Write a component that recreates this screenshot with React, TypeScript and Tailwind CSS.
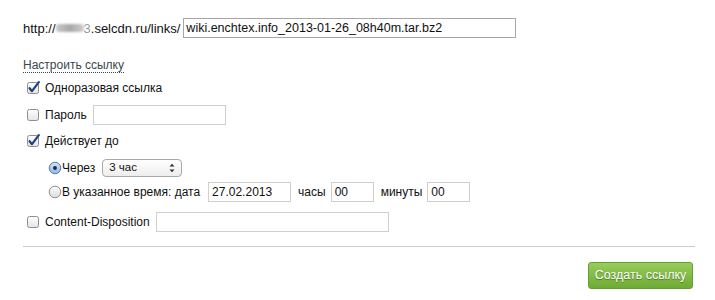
import React from "react";

function CheckBox({ checked }: { checked?: boolean }) {
  return (
    <svg width="14" height="14" viewBox="0 0 14 14" className="shrink-0">
      <defs>
        <linearGradient id={checked ? "cbg1" : "cbg0"} x1="0" y1="0" x2="0" y2="1">
          <stop offset="0" stopColor="#ffffff" />
          <stop offset="1" stopColor="#e4e4e4" />
        </linearGradient>
      </defs>
      <rect x="1.5" y="1.5" width="11" height="11" rx="2" fill={`url(#${checked ? "cbg1" : "cbg0"})`} stroke="#8e8e8e" strokeWidth="1" />
      {checked && (
        <path d="M3.6 7.2 L6 10.2 L12.8 1.2" fill="none" stroke="#243f7a" strokeWidth="2.2" strokeLinecap="round" strokeLinejoin="round" />
      )}
    </svg>
  );
}

function Radio({ checked }: { checked?: boolean }) {
  return (
    <svg width="14" height="14" viewBox="0 0 14 14" className="shrink-0">
      <defs>
        <linearGradient id={checked ? "rg1" : "rg0"} x1="0" y1="0" x2="0" y2="1">
          <stop offset="0" stopColor={checked ? "#cfe3f7" : "#fbfbfb"} />
          <stop offset="1" stopColor={checked ? "#8fb8e3" : "#dcdcdc"} />
        </linearGradient>
      </defs>
      <circle cx="7" cy="7" r="5.8" fill={`url(#${checked ? "rg1" : "rg0"})`} stroke={checked ? "#5a7ea8" : "#8e8e8e"} strokeWidth="1" />
      {checked && <circle cx="7" cy="7" r="1.9" fill="#1b2a3e" />}
    </svg>
  );
}

export default function App() {
  return (
    <div className="w-[715px] h-[300px] bg-white pl-[23px] font-['Liberation_Sans',Arial,sans-serif] text-[12px] text-[#111] overflow-hidden">
      {/* URL row */}
      <div className="mt-[18px] h-[20px] flex items-center">
        <span className="text-[13px] leading-none">http://</span>
        <span className="inline-block w-[28px] h-[8px] rounded-[3px] bg-gradient-to-r from-[#c8c8c8] via-[#a8a8a8] to-[#d0d0d0] blur-[1px]" />
        <span className="text-[13px] leading-none text-[#999] blur-[0.6px]">3</span>
        <span className="text-[13px] leading-none">.selcdn.ru/links/</span>
        <div className="ml-[3px] w-[333px] h-[20px] border border-[#a6a6a6] flex items-center pl-[2px] text-[12.5px] leading-none">
          wiki.enchtex.info_2013-01-26_08h40m.tar.bz2
        </div>
      </div>

      {/* Configure link */}
      <div className="mt-[21px] h-[14px] flex items-center">
        <span className="leading-none text-[#3a4650] pb-[1px] border-b border-dotted border-[#3a4650]">Настроить ссылку</span>
      </div>

      {/* One-time link */}
      <div className="mt-[8px] h-[14px] flex items-center pl-[3px] gap-[5px]">
        <CheckBox checked />
        <span className="leading-none">Одноразовая ссылка</span>
      </div>

      {/* Password */}
      <div className="mt-[10px] h-[20px] flex items-center pl-[3px]">
        <CheckBox />
        <span className="ml-[5px] leading-none">Пароль</span>
        <div className="ml-[6px] w-[133px] h-[20px] border border-[#cfcfcf]" />
      </div>

      {/* Valid until */}
      <div className="mt-[9px] h-[14px] flex items-center pl-[3px] gap-[5px]">
        <CheckBox checked />
        <span className="leading-none">Действует до</span>
      </div>

      {/* Through */}
      <div className="mt-[11px] h-[18px] flex items-center pl-[25px]">
        <Radio checked />
        <span className="ml-[0px] leading-none">Через</span>
        <div className="ml-[7px] w-[80px] h-[18px] rounded-[4px] border border-[#a9a9a9] bg-gradient-to-b from-white to-[#ededed] flex items-center justify-between pl-[6px] pr-[6px] text-[11.5px] leading-none">
          <span>3 час</span>
          <svg width="6" height="10" viewBox="0 0 6 10">
            <path d="M0.5 3.5 L3 0.8 L5.5 3.5 Z" fill="#333" />
            <path d="M0.5 6.5 L3 9.2 L5.5 6.5 Z" fill="#333" />
          </svg>
        </div>
      </div>

      {/* At specified time */}
      <div className="mt-[5px] h-[20px] flex items-center pl-[25px]">
        <Radio />
        <span className="leading-none">В указанное время: дата</span>
        <div className="ml-[8px] w-[83px] h-[20px] border border-[#cfcfcf] flex items-center pl-[3px] leading-none">27.02.2013</div>
        <span className="ml-[7px] leading-none">часы</span>
        <div className="ml-[5px] w-[43px] h-[20px] border border-[#cfcfcf] flex items-center pl-[3px] leading-none">00</div>
        <span className="ml-[7px] leading-none">минуты</span>
        <div className="ml-[5px] w-[43px] h-[20px] border border-[#cfcfcf] flex items-center pl-[3px] leading-none">00</div>
      </div>

      {/* Content-Disposition */}
      <div className="mt-[10px] h-[20px] flex items-center pl-[3px]">
        <CheckBox />
        <span className="ml-[5px] leading-none">Content-Disposition</span>
        <div className="ml-[6px] w-[233px] h-[20px] border border-[#cfcfcf]" />
      </div>

      {/* Divider */}
      <div className="mt-[14px] w-[672px] h-px bg-[#cccccc]" />

      {/* Button */}
      <div className="w-[672px] flex justify-end mt-[15px] pr-[2px]">
        <div className="w-[105px] h-[27px] rounded-[3px] border border-[#66a034] bg-gradient-to-b from-[#98cd5a] to-[#6eab35] flex items-center justify-center text-white text-[12.5px] leading-none [text-shadow:0_1px_1px_rgba(40,80,10,0.6)]">
          Создать ссылку
        </div>
      </div>
    </div>
  );
}
